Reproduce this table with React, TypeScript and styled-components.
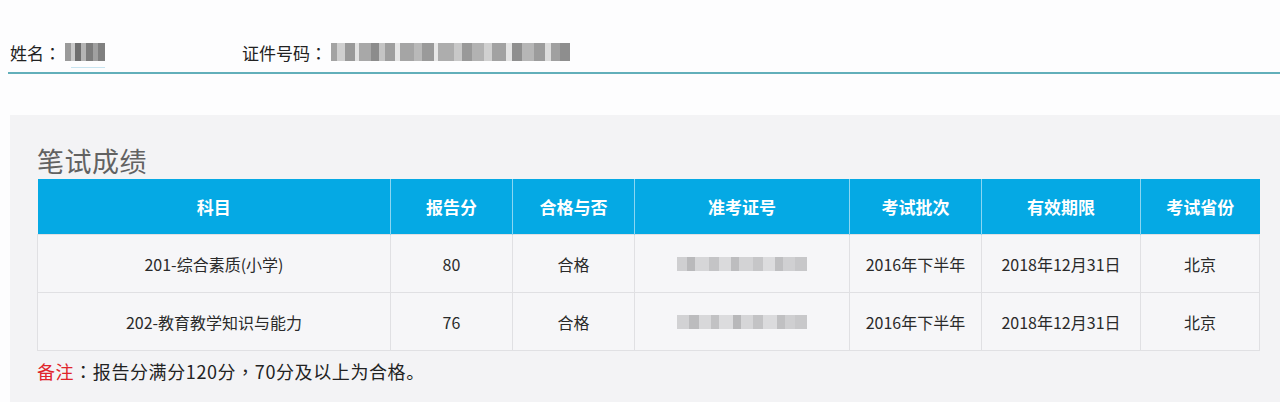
import React from "react";
import styled, { createGlobalStyle } from "styled-components";

const Global = createGlobalStyle`
  html, body { margin: 0; padding: 0; background: #fdfdfe; }
  body { font-family: "Noto Sans CJK SC", "Noto Sans", sans-serif; width: 1280px; height: 402px; overflow: hidden; }
`;

const Page = styled.div`
  width: 1280px;
  height: 402px;
  background: #fdfdfe;
`;

const InfoBar = styled.div`
  box-sizing: border-box;
  height: 74px;
  margin-left: 8px;
  padding: 32px 0 0 2px;
  border-bottom: 2px solid #62afba;
  display: flex;
  align-items: center;
`;

const Field = styled.div<{ $w: number }>`
  width: ${(p) => p.$w}px;
  display: flex;
  align-items: center;
  font-size: 17px;
  color: #222;
  height: 40px;
`;

const Label = styled.span`
  margin-right: 4px;
`;

const Punct = styled.span`
  font-family: "Noto Sans CJK TC", "Noto Sans CJK SC", sans-serif;
`;

const MosaicRow = styled.span<{ $h: number }>`
  display: inline-flex;
  height: ${(p) => p.$h}px;
  position: relative;
`;

const Cell = styled.span`
  display: block;
  height: 100%;
`;

const Underline = styled.span`
  position: absolute;
  left: 6px;
  right: 0;
  bottom: -7px;
  height: 1px;
  background: #c8e4f0;
`;

const Panel = styled.div`
  margin: 41px 0 0 10px;
  height: 287px;
  background: #f3f3f5;
  padding: 31px 0 0 27px;
  box-sizing: border-box;
`;

const Title = styled.div`
  font-size: 27px;
  line-height: 30px;
  color: #626262;
  margin-bottom: 3px;
  letter-spacing: 0.5px;
`;

const Table = styled.table`
  border-collapse: collapse;
  table-layout: fixed;
  width: 1222px;
`;

const Th = styled.th`
  height: 55px;
  padding: 0;
  background: #05a9e4;
  color: #fff;
  font-size: 17px;
  font-weight: 700;
  border-left: 1px solid #8ad6f2;
  &:first-child { border-left: none; }
`;

const Td = styled.td`
  height: 57px;
  padding: 0;
  text-align: center;
  font-size: 16px;
  color: #2a2a2a;
  background: #f6f6f8;
  border: 1px solid #e0e0e3;
`;

const Note = styled.div`
  margin-top: 8px;
  font-size: 18px;
  line-height: 24px;
  color: #222;
  letter-spacing: 0.6px;
`;

const Red = styled.span`
  color: #e0252c;
`;

type Block = [number, string];

const Mosaic: React.FC<{ blocks: Block[]; h: number; underline?: boolean }> = ({ blocks, h, underline }) => (
  <MosaicRow $h={h}>
    {blocks.map(([w, c], i) => (
      <Cell key={i} style={{ width: w, background: c }} />
    ))}
    {underline && <Underline />}
  </MosaicRow>
);

const nameBlocks: Block[] = [
  [6, "#9a9a9a"], [4, "#c9c9c9"], [6, "#6f6f6f"], [5, "#b4b4b4"], [7, "#7c7c7c"], [5, "#a0a0a0"], [7, "#808080"],
];

const idBlocks: Block[] = [
  [6, "#a3a3a3"], [8, "#cfcfcf"], [10, "#999"], [4, "#e2e2e2"], [12, "#a8a8a8"], [8, "#8c8c8c"], [6, "#c4c4c4"],
  [10, "#9e9e9e"], [5, "#e6e6e6"], [14, "#a5a5a5"], [8, "#b9b9b9"], [12, "#9a9a9a"], [4, "#e8e8e8"],
  [16, "#adadad"], [8, "#c8c8c8"], [10, "#999"], [12, "#b2b2b2"], [8, "#d0d0d0"], [14, "#a2a2a2"],
  [6, "#e4e4e4"], [10, "#8f8f8f"], [12, "#b6b6b6"], [11, "#9c9c9c"], [6, "#dcdcdc"], [9, "#a0a0a0"], [10, "#8e8e8e"],
];

const ticket1: Block[] = [
  [10, "#cfcfd1"], [8, "#b9b9bb"], [14, "#d6d6d8"], [10, "#c4c4c6"], [12, "#dadadc"], [8, "#bdbdbf"],
  [14, "#d3d3d5"], [10, "#c6c6c8"], [12, "#dcdcde"], [8, "#bfbfc1"], [12, "#d0d0d2"], [12, "#c7c7c9"],
];
const ticket2: Block[] = [
  [12, "#d2d2d4"], [10, "#bcbcbe"], [12, "#d8d8da"], [8, "#c2c2c4"], [14, "#dcdcde"], [8, "#b8b8ba"],
  [12, "#d6d6d8"], [10, "#c3c3c5"], [14, "#dbdbdd"], [8, "#c0c0c2"], [10, "#cfcfd1"], [12, "#c8c8ca"],
];

const cols = [353, 122, 122, 215, 132, 159, 119];
const heads = ["科目", "报告分", "合格与否", "准考证号", "考试批次", "有效期限", "考试省份"];

const rows = [
  { subject: "201-综合素质(小学)", score: "80", pass: "合格", ticket: ticket1, batch: "2016年下半年", valid: "2018年12月31日", prov: "北京" },
  { subject: "202-教育教学知识与能力", score: "76", pass: "合格", ticket: ticket2, batch: "2016年下半年", valid: "2018年12月31日", prov: "北京" },
];

export default function App() {
  return (
    <Page>
      <Global />
      <InfoBar>
        <Field $w={232}>
          <Label>
            姓名<Punct>：</Punct>
          </Label>
          <Mosaic blocks={nameBlocks} h={18} underline />
        </Field>
        <Field $w={400}>
          <Label>
            证件号码<Punct>：</Punct>
          </Label>
          <Mosaic blocks={idBlocks} h={18} />
        </Field>
      </InfoBar>
      <Panel>
        <Title>笔试成绩</Title>
        <Table>
          <colgroup>
            {cols.map((w, i) => (
              <col key={i} style={{ width: w }} />
            ))}
          </colgroup>
          <thead>
            <tr>
              {heads.map((h) => (
                <Th key={h}>{h}</Th>
              ))}
            </tr>
          </thead>
          <tbody>
            {rows.map((r) => (
              <tr key={r.subject}>
                <Td>{r.subject}</Td>
                <Td>{r.score}</Td>
                <Td>{r.pass}</Td>
                <Td>
                  <Mosaic blocks={r.ticket} h={14} />
                </Td>
                <Td>{r.batch}</Td>
                <Td>{r.valid}</Td>
                <Td>{r.prov}</Td>
              </tr>
            ))}
          </tbody>
        </Table>
        <Note>
          <Red>备注</Red>
          <Punct>：</Punct>报告分满分120分<Punct>，</Punct>70分及以上为合格。
        </Note>
      </Panel>
    </Page>
  );
}
